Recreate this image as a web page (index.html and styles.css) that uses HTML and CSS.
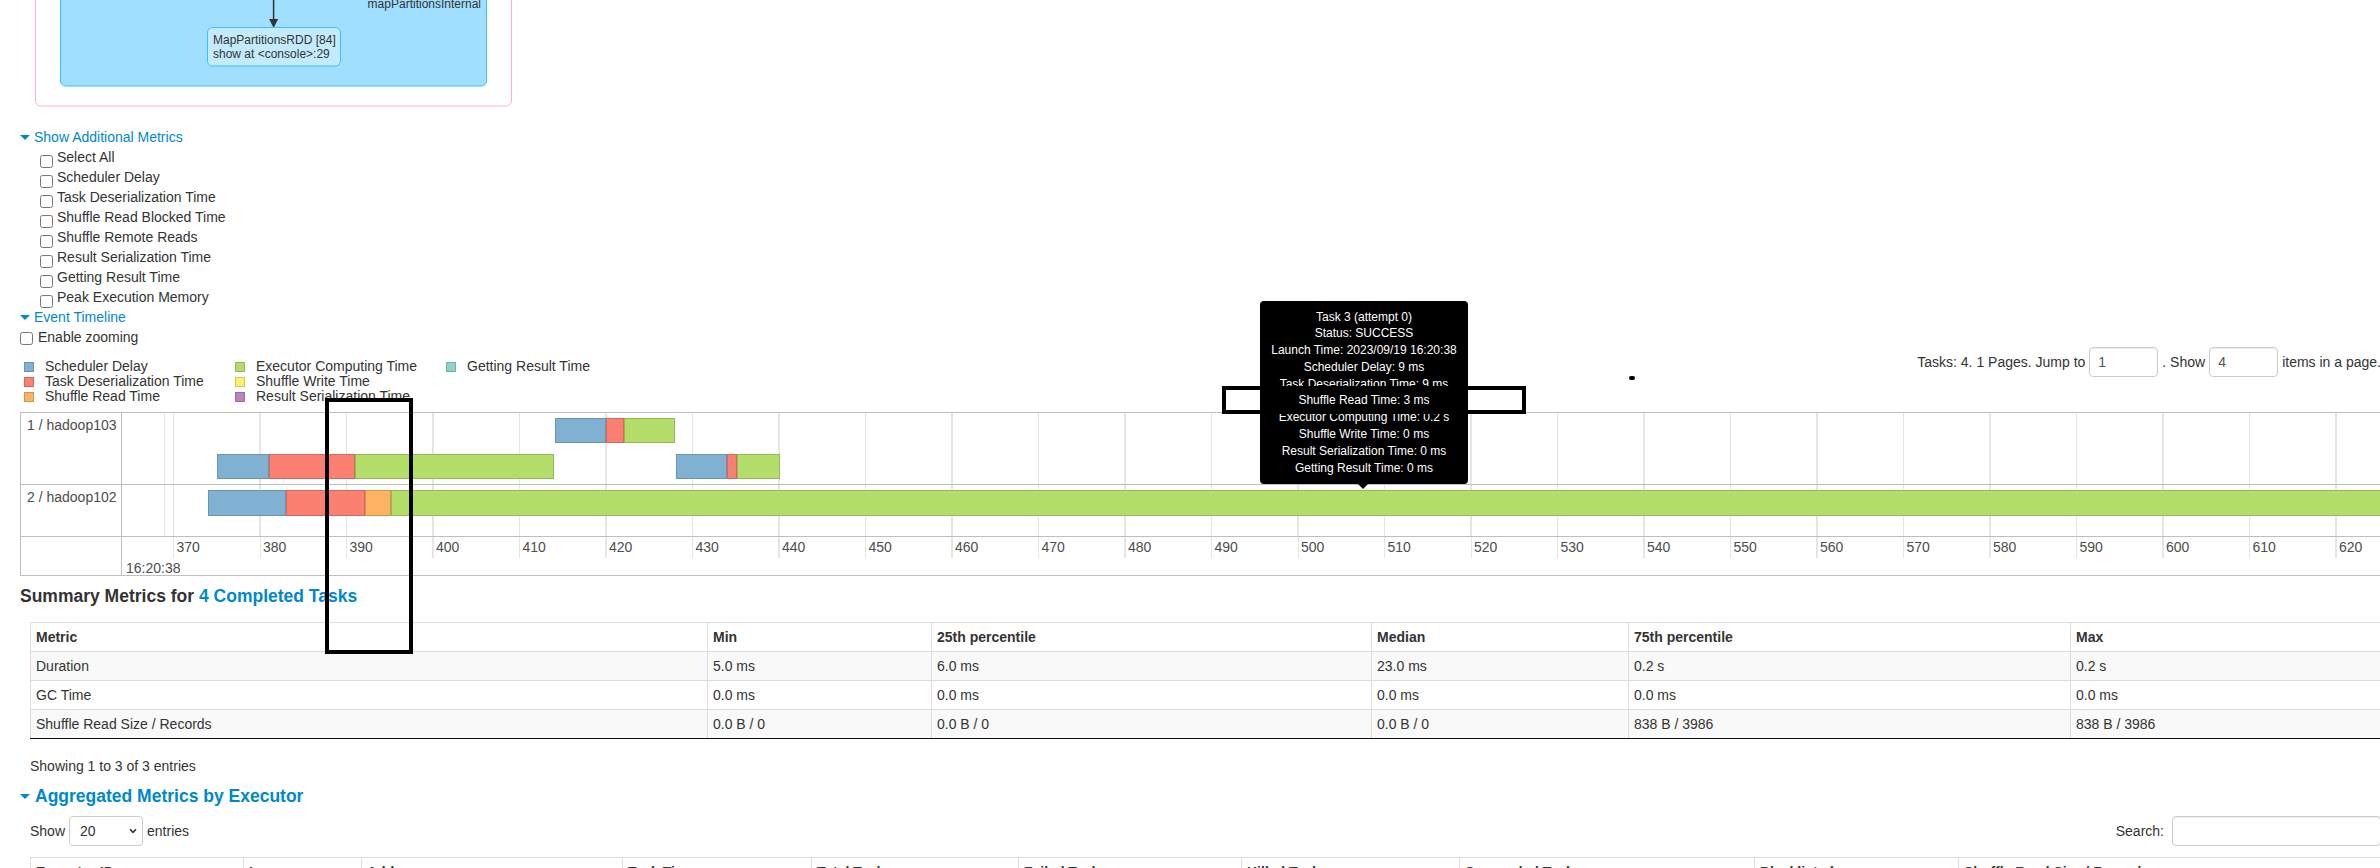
FILE: index.html
```html
<!DOCTYPE html>
<html lang="en">
<head>
<meta charset="utf-8">
<title>Stage Details</title>
<link rel="stylesheet" href="styles.css">
</head>
<body>
<div class="page">
  <div class="dag">
    <svg class="dag-svg" width="540" height="127" viewBox="0 0 540 127">
      <rect class="stage-box" x="35.5" y="-300" width="476" height="406" rx="5" ry="5"/>
      <rect class="cluster-box" x="60.5" y="-300" width="426" height="386" rx="5" ry="5"/>
      <text class="cluster-label" x="481" y="8" text-anchor="end">mapPartitionsInternal</text>
      <path class="edge" d="M273.6 -5 V20"/>
      <path class="arrowhead" d="M269.1 19 L278.1 19 L273.6 28 Z"/>
      <rect class="node-box" x="207.5" y="27.5" width="133" height="38.5" rx="5" ry="5"/>
      <text class="node-label" x="213" y="44">MapPartitionsRDD [84]</text>
      <text class="node-label" x="213" y="58">show at &lt;console&gt;:29</text>
    </svg>
  </div>

  <div class="toggle"><span class="arrow-open"></span><a class="toggle-link" href="#">Show Additional Metrics</a></div>
  <ul class="metric-list">
    <li><input type="checkbox"><span>Select All</span></li>
    <li><input type="checkbox"><span>Scheduler Delay</span></li>
    <li><input type="checkbox"><span>Task Deserialization Time</span></li>
    <li><input type="checkbox"><span>Shuffle Read Blocked Time</span></li>
    <li><input type="checkbox"><span>Shuffle Remote Reads</span></li>
    <li><input type="checkbox"><span>Result Serialization Time</span></li>
    <li><input type="checkbox"><span>Getting Result Time</span></li>
    <li><input type="checkbox"><span>Peak Execution Memory</span></li>
  </ul>
  <div class="toggle"><span class="arrow-open"></span><a class="toggle-link" href="#">Event Timeline</a></div>
  <div class="zoom-row"><input type="checkbox"><span>Enable zooming</span></div>

  <div class="tl-controls">
    <div class="legend">
      <div class="legend-item"><span class="swatch sw-sched"></span>Scheduler Delay</div>
      <div class="legend-item"><span class="swatch sw-deser"></span>Task Deserialization Time</div>
      <div class="legend-item"><span class="swatch sw-read"></span>Shuffle Read Time</div>
      <div class="legend-item"><span class="swatch sw-exec"></span>Executor Computing Time</div>
      <div class="legend-item"><span class="swatch sw-write"></span>Shuffle Write Time</div>
      <div class="legend-item"><span class="swatch sw-ser"></span>Result Serialization Time</div>
      <div class="legend-item"><span class="swatch sw-get"></span>Getting Result Time</div>
    </div>
    <div class="paging">
      <span>Tasks: 4. 1 Pages. Jump to</span>
      <input class="page-input" type="text" value="1">
      <span>. Show</span>
      <input class="page-input" type="text" value="4">
      <span>items in a page.</span>
    </div>
  </div>

  <div class="timeline">
    <div class="tl-label">1 / hadoop103</div>
    <div class="tl-row">
      <div class="bar" style="left:95px;top:41px"><span class="seg s-sched" style="width:51.75px"></span><span class="seg s-deser" style="width:86.65px"></span><span class="seg s-exec" style="width:199.1px"></span></div>
      <div class="bar" style="left:432.5px;top:5.3px"><span class="seg s-sched" style="width:51.5px"></span><span class="seg s-deser" style="width:17.7px"></span><span class="seg s-exec" style="width:51.7px"></span></div>
      <div class="bar" style="left:554.3px;top:41px"><span class="seg s-sched" style="width:50.7px"></span><span class="seg s-deser" style="width:10px"></span><span class="seg s-exec" style="width:43px"></span></div>
    </div>
    <div class="tl-label">2 / hadoop102</div>
    <div class="tl-row">
      <div class="bar bar-tall" style="left:86px;top:5px"><span class="seg s-sched" style="width:78.2px"></span><span class="seg s-deser" style="width:78.5px"></span><span class="seg s-read" style="width:25.9px"></span><span class="seg s-exec" style="width:2100px"></span></div>
    </div>
    <div class="tl-label tl-label-axis"></div>
    <div class="tl-axis">
      <div class="axis-minor">
        <span>370</span><span>380</span><span>390</span><span>400</span><span>410</span><span>420</span><span>430</span><span>440</span><span>450</span><span>460</span><span>470</span><span>480</span><span>490</span><span>500</span><span>510</span><span>520</span><span>530</span><span>540</span><span>550</span><span>560</span><span>570</span><span>580</span><span>590</span><span>600</span><span>610</span><span>620</span><span>630</span>
      </div>
      <div class="axis-major">16:20:38</div>
    </div>
  </div>

  <h4 class="section-title">Summary Metrics for <a class="title-link" href="#">4 Completed Tasks</a></h4>
  <table class="data-table summary-table">
    <thead>
      <tr><th class="c-metric">Metric</th><th class="c-min">Min</th><th class="c-p25">25th percentile</th><th class="c-med">Median</th><th class="c-p75">75th percentile</th><th>Max</th></tr>
    </thead>
    <tbody>
      <tr><td>Duration</td><td>5.0 ms</td><td>6.0 ms</td><td>23.0 ms</td><td>0.2 s</td><td>0.2 s</td></tr>
      <tr><td>GC Time</td><td>0.0 ms</td><td>0.0 ms</td><td>0.0 ms</td><td>0.0 ms</td><td>0.0 ms</td></tr>
      <tr><td>Shuffle Read Size / Records</td><td>0.0 B / 0</td><td>0.0 B / 0</td><td>0.0 B / 0</td><td>838 B / 3986</td><td>838 B / 3986</td></tr>
    </tbody>
  </table>
  <div class="dt-info">Showing 1 to 3 of 3 entries</div>

  <h4 class="section-title agg-title"><span class="arrow-open"></span><a class="agg-link" href="#">Aggregated Metrics by Executor</a></h4>
  <div class="dt-controls">
    <div class="dt-length">
      <span>Show</span>
      <div class="select-wrap">
        <select class="len-select"><option>20</option><option>40</option><option>60</option><option>100</option></select>
        <svg class="chev" width="8" height="6" viewBox="0 0 8 6"><path d="M1 1.2 L4 4.4 L7 1.2" fill="none" stroke="#333" stroke-width="1.6"/></svg>
      </div>
      <span>entries</span>
    </div>
    <div class="dt-search"><span>Search:</span><input class="search-input" type="search"></div>
  </div>
  <table class="data-table exec-table">
    <thead>
      <tr><th class="e1">Executor ID</th><th class="e2">Logs</th><th class="e3">Address</th><th class="e4">Task Time</th><th class="e5">Total Tasks</th><th class="e6">Failed Tasks</th><th class="e7">Killed Tasks</th><th class="e8">Succeeded Tasks</th><th class="e9">Blacklisted</th><th>Shuffle Read Size / Records</th></tr>
    </thead>
    <tbody>
      <tr><td>1</td><td></td><td>hadoop103:40345</td><td>0.3 s</td><td>3</td><td>0</td><td>0</td><td>3</td><td>false</td><td>838 B / 3986</td></tr>
      <tr><td>2</td><td></td><td>hadoop102:38821</td><td>0.2 s</td><td>1</td><td>0</td><td>0</td><td>1</td><td>false</td><td>0.0 B / 0</td></tr>
    </tbody>
  </table>

  <div class="task-tooltip">
    <div>Task 3 (attempt 0)</div>
    <div>Status: SUCCESS</div>
    <div>Launch Time: 2023/09/19 16:20:38</div>
    <div>Scheduler Delay: 9 ms</div>
    <div>Task Deserialization Time: 9 ms</div>
    <div>Shuffle Read Time: 3 ms</div>
    <div>Executor Computing Time: 0.2 s</div>
    <div>Shuffle Write Time: 0 ms</div>
    <div>Result Serialization Time: 0 ms</div>
    <div>Getting Result Time: 0 ms</div>
  </div>
  <div class="mark mark-a"></div>
  <div class="mark mark-b"></div>
  <div class="mark-dot"></div>
</div>
</body>
</html>
```

FILE: styles.css
```css
html, body {
  margin: 0;
  padding: 0;
  overflow: hidden;
  background: #fff;
}

body {
  font-family: "Liberation Sans", Arial, Helvetica, sans-serif;
  font-size: 14px;
  line-height: 20px;
  color: #333;
}

.page {
  position: relative;
  width: 2361px;
  padding: 0 19px 0 20px;
}

/* DAG */
.dag {
  height: 127px;
  margin-left: -20px;
}
.dag-svg { display: block; }
.stage-box { fill: #fff; stroke: #ffb3c1; stroke-width: 1px; }
.cluster-box { fill: #a0dfff; stroke: #3ec0ff; stroke-width: 1px; }
.node-box { fill: #c3ebff; stroke: #3ec0ff; stroke-width: 1px; }
.edge { stroke: #333; stroke-width: 1.5px; fill: none; }
.arrowhead { fill: #333; }
.cluster-label, .node-label {
  font-family: "Liberation Sans", Arial, sans-serif;
  font-size: 12px;
  fill: #333;
}

/* toggles */
.toggle {
  height: 20px;
  display: flex;
  align-items: center;
}
.arrow-open {
  width: 0;
  height: 0;
  border-left: 5px solid transparent;
  border-right: 5px solid transparent;
  border-top: 5px solid #0088cc;
  margin-right: 4px;
}
.toggle-link, .title-link, .agg-link {
  color: #0088cc;
  text-decoration: none;
}

.metric-list {
  list-style: none;
  margin: 0;
  padding: 0 0 0 20px;
}
.metric-list li {
  height: 20px;
  display: flex;
  align-items: flex-start;
}
.metric-list input {
  width: 13px;
  height: 13px;
  margin: 8px 4px 0 0;
}

.zoom-row {
  height: 20px;
  display: flex;
  align-items: center;
}
.zoom-row input {
  width: 13px;
  height: 13px;
  margin: 3px 5px 0 0;
}

/* timeline controls */
.tl-controls {
  height: 65px;
  display: flex;
  justify-content: space-between;
  align-items: flex-start;
}
.legend {
  margin: 12px 0 0 4px;
  display: grid;
  grid-template-rows: repeat(3, 15px);
  grid-template-columns: repeat(3, 211px);
  grid-auto-flow: column;
}
.legend-item {
  display: flex;
  align-items: center;
  line-height: 15px;
  white-space: nowrap;
}
.swatch {
  box-sizing: border-box;
  width: 10px;
  height: 10px;
  margin-right: 11px;
  border: 1px solid;
}
.sw-sched { background: #80b1d3; border-color: #6b94b0; }
.sw-deser { background: #fb8072; border-color: #d26b5f; }
.sw-read  { background: #fdb462; border-color: #d39651; }
.sw-exec  { background: #b3de69; border-color: #95b957; }
.sw-write { background: #ffed6f; border-color: #d5c65c; }
.sw-ser   { background: #bc80bd; border-color: #9d6b9e; }
.sw-get   { background: #8dd3c7; border-color: #75b0a6; }

.paging {
  display: flex;
  align-items: center;
  gap: 4px;
  height: 30px;
  white-space: nowrap;
}
.page-input {
  box-sizing: border-box;
  width: 69px;
  height: 30px;
  margin: 0;
  padding: 0 8px;
  border: 1px solid #ccc;
  border-radius: 4px;
  box-shadow: inset 0 1px 1px rgba(0,0,0,0.075);
  font-family: inherit;
  font-size: 14px;
  color: #555;
}

/* timeline */
.timeline {
  display: grid;
  grid-template-columns: 101px 1fr;
  grid-template-rows: 72px 52px 38px;
  border: 1px solid #bfbfbf;
  overflow: hidden;
}
.tl-label {
  box-sizing: border-box;
  border-right: 1px solid #bfbfbf;
  border-bottom: 1px solid #bfbfbf;
  padding: 4px 6px;
  line-height: 16px;
  color: #4d4d4d;
  white-space: nowrap;
}
.tl-label-axis { border-bottom: 0; }
.tl-row {
  position: relative;
  box-sizing: border-box;
  border-bottom: 1px solid #bfbfbf;
  overflow: hidden;
  background-image: repeating-linear-gradient(to right, #e5e5e5 0, #e5e5e5 1px, transparent 1px, transparent 86.5px);
  background-position: 51px 0;
}
.bar {
  position: absolute;
  display: flex;
  height: 25px;
}
.bar-tall { height: 26px; }
.seg {
  box-sizing: border-box;
  flex: none;
  height: 100%;
  border: 1px solid;
}
.s-sched { background: #80b1d3; border-color: #6b94b0; }
.s-deser { background: #fb8072; border-color: #d26b5f; }
.s-read  { background: #fdb462; border-color: #d39651; }
.s-exec  { background: #b3de69; border-color: #95b957; }

.tl-axis {
  position: relative;
  overflow: hidden;
  background-image: repeating-linear-gradient(to right, #e5e5e5 0, #e5e5e5 1px, transparent 1px, transparent 86.5px);
  background-position: 51px 0;
  background-size: 100% 21px;
  background-repeat: no-repeat;
  color: #4d4d4d;
  line-height: 16px;
}
.axis-minor {
  display: flex;
  padding: 2px 0 0 54.5px;
  white-space: nowrap;
}
.axis-minor span { flex: 0 0 86.5px; }
.axis-major {
  padding: 5px 0 0 4px;
}

/* summary */
.section-title {
  margin: 10px 0 16px;
  font-size: 17.5px;
  line-height: 20px;
  font-weight: bold;
  color: #333;
}

.data-table {
  margin-left: 10px;
  width: calc(100% - 10px);
  border-collapse: collapse;
  table-layout: fixed;
  border-top: 1px solid #ddd;
  border-left: 1px solid #ddd;
}
.data-table th, .data-table td {
  padding: 4px 5px;
  line-height: 20px;
  text-align: left;
  border-left: 1px solid #ddd;
  border-top: 1px solid #ddd;
  white-space: nowrap;
  overflow: hidden;
}
.data-table th { font-weight: bold; }
.summary-table tbody tr:nth-child(odd) td { background: #f9f9f9; }
.summary-table tbody tr:last-child td { border-bottom: 1px solid #111; }

.c-metric { width: 666px; }
.c-min { width: 213px; }
.c-p25 { width: 429px; }
.c-med { width: 246px; }
.c-p75 { width: 431px; }

.dt-info {
  margin-top: 17px;
  padding-left: 10px;
}

.agg-title {
  display: flex;
  align-items: center;
  margin: 10px 0 10px;
}
.agg-title .arrow-open { margin-right: 5px; }

.dt-controls {
  height: 30px;
  display: flex;
  justify-content: space-between;
  align-items: center;
}
.dt-length {
  display: flex;
  align-items: center;
  gap: 4px;
  padding-left: 10px;
}
.select-wrap {
  position: relative;
  width: 74px;
  height: 30px;
}
.len-select {
  appearance: none;
  -webkit-appearance: none;
  box-sizing: border-box;
  width: 74px;
  height: 30px;
  margin: 0;
  padding: 0 0 0 10px;
  border: 1px solid #ccc;
  border-radius: 4px;
  background: #fff;
  font-family: inherit;
  font-size: 14px;
  color: #333;
}
.chev {
  position: absolute;
  right: 6px;
  top: 12px;
  pointer-events: none;
}
.dt-search {
  display: flex;
  align-items: center;
  gap: 8px;
}
.search-input {
  box-sizing: border-box;
  width: 209px;
  height: 30px;
  margin: 0;
  border: 1px solid #ccc;
  border-radius: 4px;
  box-shadow: inset 0 1px 1px rgba(0,0,0,0.075);
}

.exec-table { margin-top: 11px; }
.e1 { width: 202px; }
.e2 { width: 107px; }
.e3 { width: 250px; }
.e4 { width: 178px; }
.e5 { width: 196px; }
.e6 { width: 212px; }
.e7 { width: 207px; }
.e8 { width: 284px; }
.e9 { width: 193px; }

/* overlays */
.task-tooltip {
  position: absolute;
  left: 1260px;
  top: 301px;
  box-sizing: border-box;
  width: 208px;
  padding: 7.5px 6px;
  background: #000;
  color: #fff;
  border-radius: 4px;
  font-size: 12px;
  line-height: 16.8px;
  text-align: center;
  white-space: nowrap;
}
.task-tooltip::after {
  content: "";
  position: absolute;
  left: 98px;
  bottom: -5px;
  border-left: 5px solid transparent;
  border-right: 5px solid transparent;
  border-top: 5px solid #000;
}

.mark {
  position: absolute;
  box-sizing: border-box;
  border: 4px solid #000;
}
.mark-a {
  left: 1222px;
  top: 386px;
  width: 304px;
  height: 28px;
}
.mark-b {
  left: 325px;
  top: 398px;
  width: 88px;
  height: 256px;
}
.mark-dot {
  position: absolute;
  left: 1629px;
  top: 376px;
  width: 6px;
  height: 4px;
  border-radius: 2px;
  background: #000;
}
```
